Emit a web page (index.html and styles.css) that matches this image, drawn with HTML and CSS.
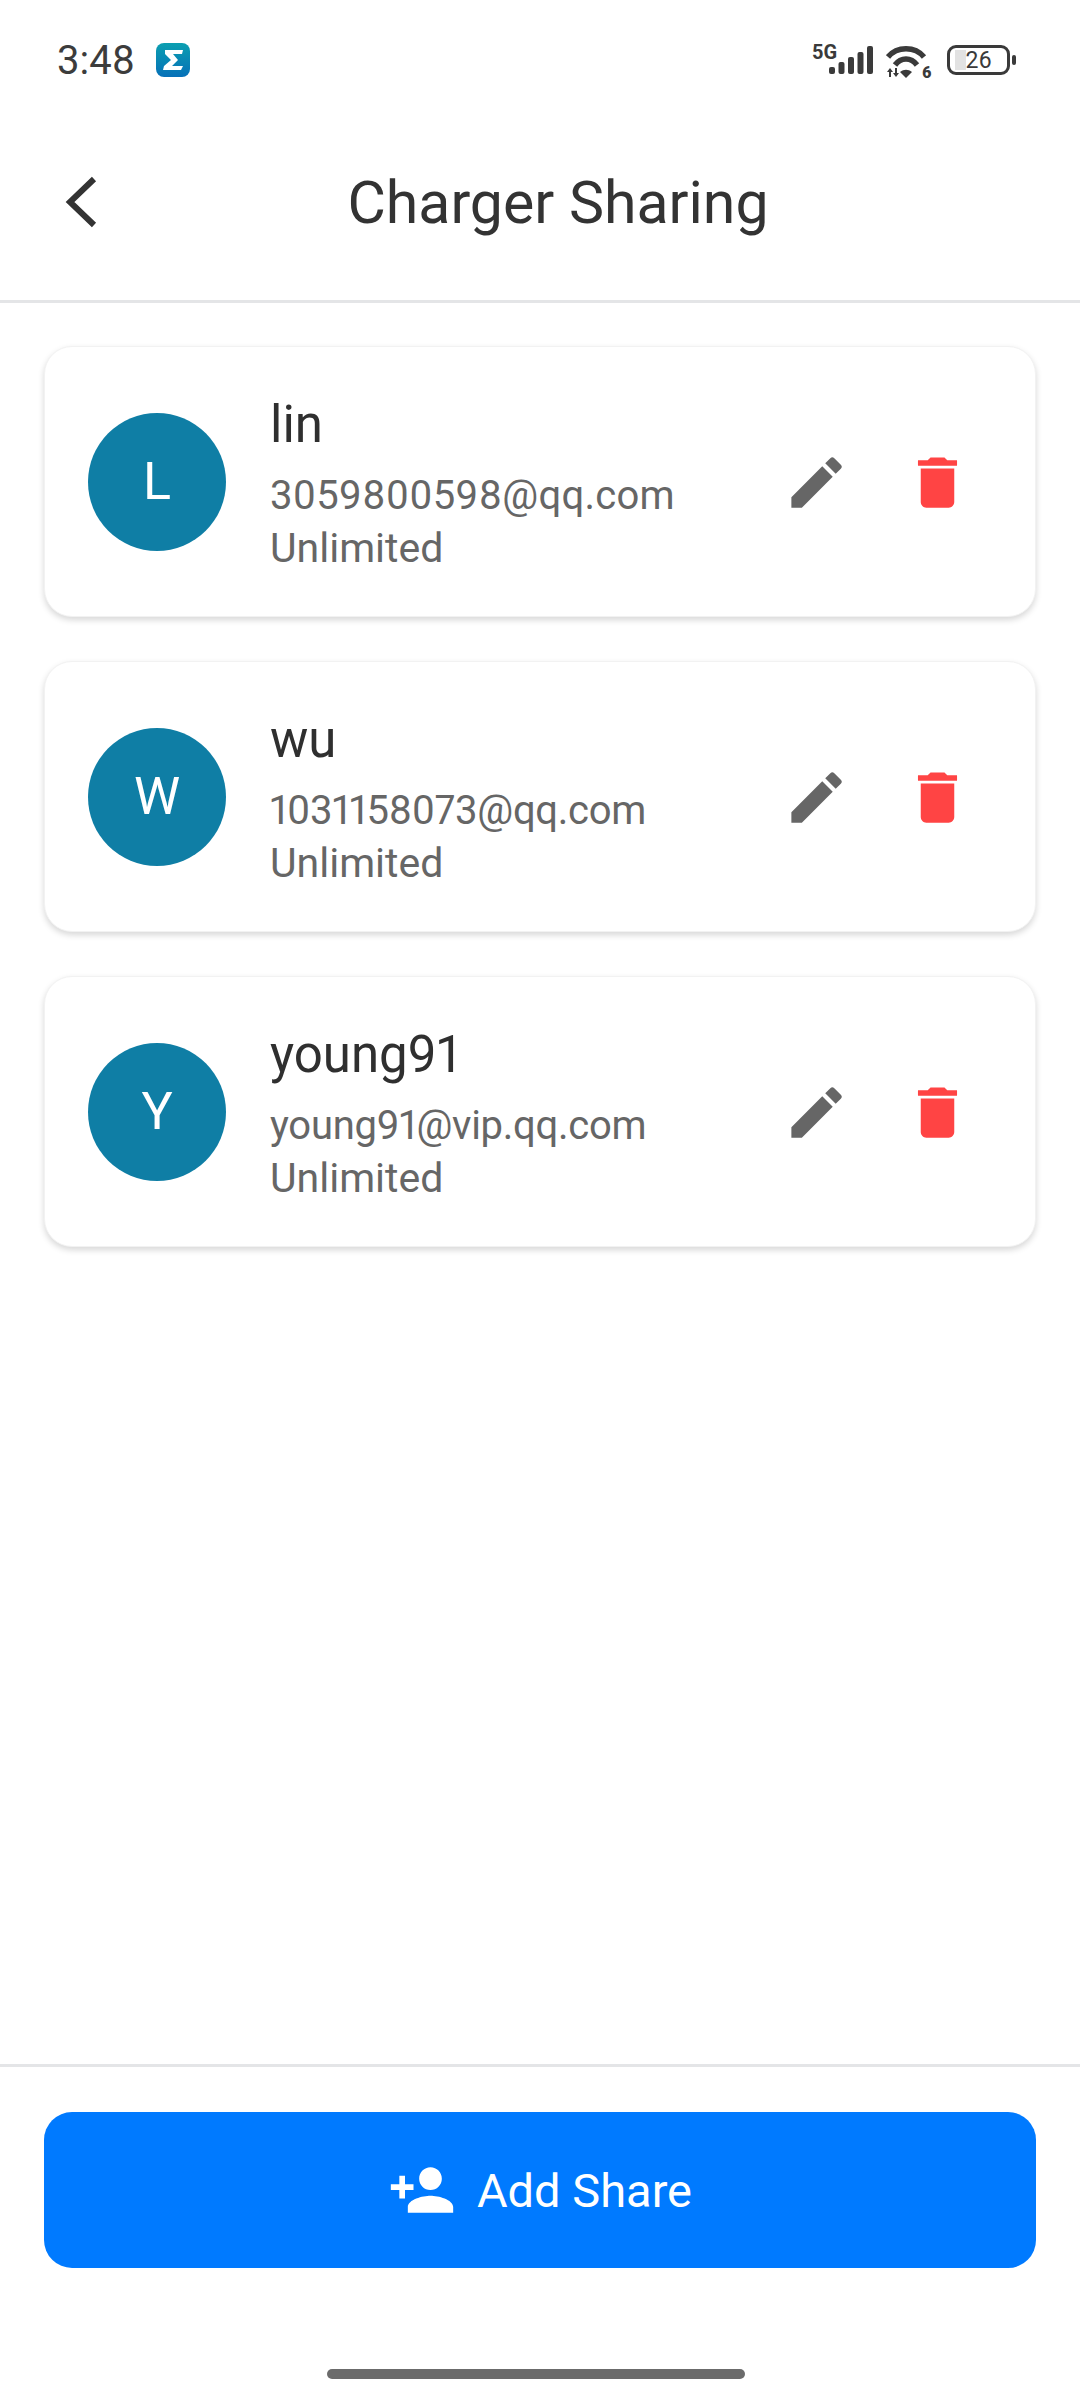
FILE: index.html
```html
<!DOCTYPE html>
<html lang="en">
<head>
    <meta charset="UTF-8">
    <meta name="viewport" content="width=device-width, initial-scale=1.0">
    <title>Charger Sharing</title>
    <link rel="stylesheet" href="styles.css">
</head>
<body>
    <div class="status-bar">
        <div class="status-left">
            <span class="clock">3:48</span>
            <svg class="app-icon" viewBox="0 0 34 34">
                <defs>
                    <linearGradient id="sigma" x1="0" y1="0" x2="0" y2="1">
                        <stop offset="0" stop-color="#0b9fb0"/>
                        <stop offset="1" stop-color="#0670b8"/>
                    </linearGradient>
                </defs>
                <rect width="34" height="34" rx="8" fill="url(#sigma)"/>
                <path d="M9 7h18l-1 4H17l5 6-6 6h11l-2 4H7l1-4 7-6-6-6z" fill="#fff"/>
            </svg>
        </div>
        <div class="status-right">
            <span class="net-label">5G</span>
            <svg class="signal" viewBox="0 0 44 28">
                <rect x="0" y="21" width="6" height="7" rx="2"/>
                <rect x="9.500" y="16" width="6" height="12" rx="2"/>
                <rect x="19" y="11" width="6" height="17" rx="2"/>
                <rect x="28.500" y="6" width="6" height="22" rx="2"/>
                <rect x="38" y="0" width="6" height="28" rx="2"/>
            </svg>
            <svg class="wifi" viewBox="0 0 46 42">
                <path d="M2 13C11 2 29 2 38 13" fill="none" stroke="#3a3a3a" stroke-width="5.500"/>
                <path d="M9 21C15 13 25 13 31 21" fill="none" stroke="#3a3a3a" stroke-width="5.500"/>
                <path d="M14 28c4-3 8-3 12 0l-6 6z" fill="#3a3a3a"/>
                <path d="M4 24l-3 4h2v5h2v-5h2zM10 33l3-4h-2v-5H9v5H7z" fill="#3a3a3a"/>
                <text x="36" y="34" class="wifi-six">6</text>
            </svg>
            <div class="battery">
                <div class="battery-body">
                    <div class="battery-level"></div>
                    <span class="battery-text">26</span>
                </div>
                <div class="battery-tip"></div>
            </div>
        </div>
    </div>

    <div class="header">
        <svg class="back" viewBox="0 0 32 52">
            <path d="M29 3L5 26l24 23" fill="none" stroke="#333" stroke-width="6"/>
        </svg>
        <h1 class="title">Charger Sharing</h1>
    </div>

    <div class="list">
        <div class="card">
            <div class="avatar">L</div>
            <div class="info">
                <div class="name">lin</div>
                <div class="email email-wide">3059800598@qq.com</div>
                <div class="limit">Unlimited</div>
            </div>
            <div class="actions">
                <svg class="icon" viewBox="0 0 24 24"><path class="edit" d="M3 17.25V21h3.75L17.81 9.94l-3.75-3.75L3 17.25zM20.71 7.04a1 1 0 0 0 0-1.41l-2.34-2.34a1 1 0 0 0-1.41 0l-1.83 1.83 3.75 3.75 1.83-1.83z"/></svg>
                <svg class="icon" viewBox="0 0 24 24"><path class="trash" d="M6 19c0 1.1.9 2 2 2h8c1.1 0 2-.9 2-2V7H6v12zM19 4h-3.5l-1-1h-5l-1 1H5v2h14V4z"/></svg>
            </div>
        </div>
        <div class="card">
            <div class="avatar">W</div>
            <div class="info">
                <div class="name">wu</div>
                <div class="email">1031158073@qq.com</div>
                <div class="limit">Unlimited</div>
            </div>
            <div class="actions">
                <svg class="icon" viewBox="0 0 24 24"><path class="edit" d="M3 17.25V21h3.75L17.81 9.94l-3.75-3.75L3 17.25zM20.71 7.04a1 1 0 0 0 0-1.41l-2.34-2.34a1 1 0 0 0-1.41 0l-1.83 1.83 3.75 3.75 1.83-1.83z"/></svg>
                <svg class="icon" viewBox="0 0 24 24"><path class="trash" d="M6 19c0 1.1.9 2 2 2h8c1.1 0 2-.9 2-2V7H6v12zM19 4h-3.5l-1-1h-5l-1 1H5v2h14V4z"/></svg>
            </div>
        </div>
        <div class="card">
            <div class="avatar">Y</div>
            <div class="info">
                <div class="name">young91</div>
                <div class="email">young91@vip.qq.com</div>
                <div class="limit">Unlimited</div>
            </div>
            <div class="actions">
                <svg class="icon" viewBox="0 0 24 24"><path class="edit" d="M3 17.25V21h3.75L17.81 9.94l-3.75-3.75L3 17.25zM20.71 7.04a1 1 0 0 0 0-1.41l-2.34-2.34a1 1 0 0 0-1.41 0l-1.83 1.83 3.75 3.75 1.83-1.83z"/></svg>
                <svg class="icon" viewBox="0 0 24 24"><path class="trash" d="M6 19c0 1.1.9 2 2 2h8c1.1 0 2-.9 2-2V7H6v12zM19 4h-3.5l-1-1h-5l-1 1H5v2h14V4z"/></svg>
            </div>
        </div>
    </div>

    <div class="footer">
        <button class="add-btn">
            <svg class="add-icon" viewBox="0 0 24 24" fill="#fff"><path d="M15 12c2.21 0 4-1.79 4-4s-1.790-4-4-4-4 1.790-4 4 1.790 4 4 4zm-9-2V7H4v3H1v2h3v3h2v-3h3v-2H6zm9 4c-2.670 0-8 1.340-8 4v2h16v-2c0-2.660-5.330-4-8-4z"/></svg>
            Add Share
        </button>
        <div class="home-bar"></div>
    </div>
</body>
</html>
```

FILE: styles.css
```css
* {
    box-sizing: border-box;
}
body {
    margin: 0;
    width: 1080px;
    height: 2400px;
    background: #fff;
    font-family: Roboto, "Noto Sans", sans-serif;
    font-variant-numeric: proportional-nums;
    display: flex;
    flex-direction: column;
}
.status-bar {
    height: 120px;
    padding: 0 64px 0 57px;
    display: flex;
    justify-content: space-between;
    align-items: center;
}
.status-left {
    display: flex;
    align-items: center;
    gap: 21px;
}
.clock {
    font-size: 40px;
    color: #3c3c3c;
}
.app-icon {
    width: 34px;
    height: 34px;
}
.status-right {
    height: 36px;
    display: flex;
    align-items: flex-start;
}
.net-label {
    font-size: 20px;
    line-height: 20px;
    font-weight: 700;
    color: #3a3a3a;
    margin-right: -11px;
    width: 28px;
}
.signal {
    width: 44px;
    height: 28px;
    margin-top: 4px;
    fill: #3a3a3a;
}
.wifi {
    width: 46px;
    height: 42px;
    margin: 2px 0 0 13px;
}
.wifi-six {
    font-size: 16px;
    font-weight: 900;
    fill: #3a3a3a;
}
.battery {
    display: flex;
    align-items: center;
    margin: 3px 0 0 15px;
}
.battery-body {
    width: 63px;
    height: 30px;
    border: 3px solid #3a3a3a;
    border-radius: 9px;
    display: flex;
    align-items: center;
    justify-content: center;
    position: relative;
}
.battery-level {
    position: absolute;
    left: 5px;
    top: 2px;
    bottom: 2px;
    width: 11px;
    background: #e2e2e2;
}
.battery-text {
    position: relative;
    font-size: 23px;
    color: #3a3a3a;
}
.battery-tip {
    width: 4px;
    height: 10px;
    margin-left: 2px;
    background: #3a3a3a;
    border-radius: 2px;
}
.header {
    height: 183px;
    padding-bottom: 2px;
    display: flex;
    align-items: center;
    justify-content: center;
    border-bottom: 3px solid #e4e5e7;
    position: relative;
}
.back {
    position: absolute;
    left: 65px;
    top: 56px;
    width: 32px;
    height: 52px;
}
.title {
    margin: 0 0 14px 36px;
    font-size: 59px;
    font-weight: 400;
    color: #333;
}
.list {
    flex: 1;
    padding: 43px 44px;
    display: flex;
    flex-direction: column;
    gap: 44px;
}
.card {
    height: 271px;
    padding: 0 43px;
    display: flex;
    align-items: center;
    background: #fff;
    border: 1px solid #f2f2f2;
    border-radius: 28px;
    box-shadow: 0 3px 6px rgba(0, 0, 0, 0.16);
}
.avatar {
    width: 138px;
    height: 138px;
    border-radius: 50%;
    background: #0f7ea5;
    color: #fff;
    font-size: 52px;
    display: flex;
    align-items: center;
    justify-content: center;
    flex-shrink: 0;
}
.info {
    flex: 1;
    margin-left: 44px;
    padding-top: 4px;
}
.name {
    font-size: 51px;
    line-height: 64px;
    color: #2f2f2f;
}
.email, .limit {
    line-height: 52px;
    color: #666;
}
.email {
    margin-top: 13px;
    font-size: 40px;
    letter-spacing: -0.27px;
}
.email-wide {
    letter-spacing: 0.27px;
}
.limit {
    font-size: 41px;
}
.actions {
    display: flex;
    gap: 54px;
    margin-right: 21px;
}
.icon {
    width: 67px;
    height: 67px;
    margin-top: 2px;
}
.edit {
    fill: #666;
}
.trash {
    fill: #ff4444;
}
.footer {
    height: 336px;
    border-top: 3px solid #e4e5e7;
    padding: 45px 44px 0;
    display: flex;
    flex-direction: column;
    align-items: center;
}
.add-btn {
    width: 100%;
    height: 156px;
    background: #007aff;
    color: #fff;
    border: none;
    border-radius: 28px;
    font-family: inherit;
    font-size: 47px;
    display: flex;
    align-items: center;
    justify-content: center;
    gap: 21px;
}
.add-icon {
    width: 68px;
    height: 68px;
}
.home-bar {
    width: 418px;
    height: 10px;
    margin: 101px 8px 0 0;
    background: #6b6b6b;
    border-radius: 5px;
}
```
